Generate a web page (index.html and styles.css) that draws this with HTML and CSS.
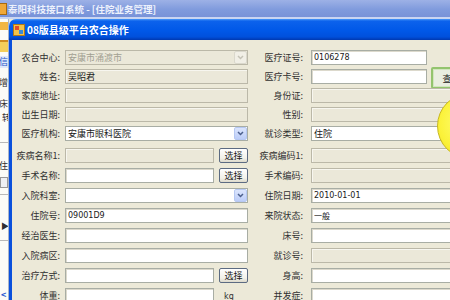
FILE: index.html
```html
<!DOCTYPE html>
<html lang="zh-CN">
<head>
    <meta charset="UTF-8">
    <title>08版县级平台农合操作</title>
    <link rel="stylesheet" href="styles.css">
</head>
<body>
<div class="app">
    <div class="app-title"><span class="app-icon"></span>泰阳科技接口系统 - [住院业务管理]</div>
    <div class="app-main">
        <div class="side">
            <span class="side-icon s1"></span>
            <span class="side-icon s2"></span>
            <span class="side-ch s3">信</span>
            <span class="side-ch s4">增</span>
            <span class="side-ch s5">床</span>
            <span class="side-ch s6">转</span>
            <span class="side-line s7"></span>
            <span class="side-ch s8">住</span>
            <span class="side-box s9"></span>
            <span class="side-line s10"></span>
            <span class="side-ch s11">&#9654;</span>
            <span class="side-line s12"></span>
            <span class="side-ch s13">&lt;</span>
        </div>
        <div class="dialog">
            <div class="dlg-title">
                <svg class="dlg-icon" width="12" height="12" viewBox="0 0 12 12">
                    <rect x="0.5" y="0.5" width="11" height="11" fill="#f3c24a" stroke="#b07818"/>
                    <rect x="2" y="2" width="4" height="4" fill="#e24c2a"/>
                    <rect x="6" y="6" width="4" height="4" fill="#3a8ad8"/>
                </svg>
                08版县级平台农合操作
            </div>
            <div class="dlg-body">
                <div class="form top">
                    <label>农合中心:</label>
                    <div class="combo off"><span>安康市涌渡市</span><i class="combo-btn"><svg width="7" height="5"><polyline points="1,1 3.5,3.5 6,1" /></svg></i></div>
                    <label>医疗证号:</label>
                    <div class="pair"><input class="in short" value="0106278"></div>

                    <label>姓名:</label>
                    <input class="in off" value="吴昭君">
                    <label>医疗卡号:</label>
                    <div class="pair"><input class="in short"><button class="find">查</button></div>

                    <label>家庭地址:</label>
                    <input class="in off">
                    <label>身份证:</label>
                    <input class="in off">

                    <label>出生日期:</label>
                    <input class="in off">
                    <label>性别:</label>
                    <input class="in off">

                    <label>医疗机构:</label>
                    <div class="combo"><span>安康市眼科医院</span><i class="combo-btn"><svg width="7" height="5"><polyline points="1,1 3.5,3.5 6,1" /></svg></i></div>
                    <label>就诊类型:</label>
                    <div class="combo"><span>住院</span></div>
                </div>
                <div class="form bottom">
                    <label>疾病名称1:</label>
                    <div class="pair"><input class="in off"><button class="pick">选择</button></div>
                    <label>疾病编码1:</label>
                    <input class="in off">

                    <label>手术名称:</label>
                    <div class="pair"><input class="in"><button class="pick">选择</button></div>
                    <label>手术编码:</label>
                    <input class="in off">

                    <label>入院科室:</label>
                    <div class="combo"><span></span><i class="combo-btn"><svg width="7" height="5"><polyline points="1,1 3.5,3.5 6,1" /></svg></i></div>
                    <label>住院日期:</label>
                    <input class="in" value="2010-01-01">

                    <label>住院号:</label>
                    <input class="in" value="09001D9">
                    <label>来院状态:</label>
                    <input class="in" value="一般">

                    <label>经治医生:</label>
                    <input class="in">
                    <label>床号:</label>
                    <input class="in">

                    <label>入院病区:</label>
                    <input class="in">
                    <label>就诊号:</label>
                    <input class="in off">

                    <label>治疗方式:</label>
                    <div class="pair"><input class="in"><button class="pick">选择</button></div>
                    <label>身高:</label>
                    <input class="in">

                    <label>体重:</label>
                    <div class="pair"><input class="in"><span class="unit">kg</span></div>
                    <label>并发症:</label>
                    <input class="in">
                </div>
            </div>
        </div>
    </div>
    <div class="glow"></div>
</div>
</body>
</html>
```

FILE: styles.css
```css
body {
    margin: 0;
}
.app {
    position: relative;
    width: 450px;
    height: 300px;
    overflow: hidden;
    background: #ece9d8;
    font-family: "Noto Sans CJK SC", sans-serif;
    font-size: 9px;
    color: #303030;
}
.app-title {
    height: 17px;
    display: flex;
    align-items: center;
    gap: 1px;
    background: linear-gradient(#9db1e6, #809bdd 55%, #7892d8);
    border-bottom: 2px solid #c9d5f2;
    color: #eef2fc;
    font-size: 9.5px;
    font-weight: bold;
    white-space: nowrap;
}
.app-icon {
    width: 10px;
    height: 10px;
    margin-left: -5px;
    background: #f0a838;
    border: 1px solid #a86a10;
}
.app-main {
    display: flex;
    height: 281px;
}
.side {
    width: 9px;
    flex: none;
    display: flex;
    flex-direction: column;
    overflow: hidden;
    background: #fbfbf7;
    border-right: 1px solid #a9b4c9;
    box-sizing: border-box;
}
.side-icon {
    display: block;
    width: 8px;
    flex: none;
}
.s1 { height: 8px; margin-top: 3px; background: #f2b642; }
.s2 { height: 10px; margin-top: 10px; background: #f4cf5a; border-top: 2px solid #d08c20; }
.side-ch {
    display: block;
    height: 12px;
    line-height: 12px;
    flex: none;
    font-size: 9px;
    margin-left: -1px;
    color: #303030;
}
.s3 { margin-top: 4px; color: #2456c8; background: #dfe8fa; }
.s4 { margin-top: 9px; }
.s5 { margin-top: 9px; }
.s6 { margin-top: 2px; margin-left: 2px; }
.side-line { display: block; flex: none; height: 1px; background: #b8b8b8; }
.s7 { margin-top: 18px; }
.s8 { margin-top: 17px; }
.side-box {
    display: block;
    flex: none;
    height: 9px;
    margin-top: 5px;
    border: 1px solid #9a9a9a;
    background: #eef0f4;
}
.s10 { margin-top: 6px; }
.s11 { margin-top: 25px; font-size: 8px; margin-left: 1px; }
.s12 { margin-top: 8px; }
.s13 { margin-top: 48px; color: #2a5ad0; font-weight: bold; margin-left: 1px; }

.dialog {
    flex: 1;
    display: flex;
    flex-direction: column;
}
.dlg-title {
    height: 21px;
    flex: none;
    display: flex;
    align-items: center;
    gap: 2px;
    padding-left: 4px;
    border-top-left-radius: 7px;
    background: linear-gradient(#4a98f8 0, #0c62ec 10%, #0058e8 55%, #0050dc 85%, #0038b0);
    color: #ffffff;
    font-size: 10px;
    font-weight: bold;
    white-space: nowrap;
}
.dlg-body {
    flex: 1;
    background: #ece9d8;
    border-left: 3px solid #0a50dc;
    padding-top: 10px;
}
.form {
    display: grid;
    grid-template-columns: 53px 183px 63px 160px;
    align-items: center;
}
.top {
    grid-template-rows: repeat(5, 15px);
    row-gap: 4px;
}
.bottom {
    margin-top: 7px;
    grid-template-rows: repeat(8, 15px);
    row-gap: 5px;
}
label {
    text-align: right;
    white-space: nowrap;
    padding-right: 5px;
    line-height: 15px;
}
.form label:nth-child(4n+3) {
    padding-right: 8px;
}
.in {
    box-sizing: border-box;
    width: 100%;
    height: 15px;
    margin: 0;
    padding: 0 2px;
    border: 1px solid #a8ada4;
    box-shadow: inset 1px 1px 0 #dcd9cc;
    background: #ffffff;
    font-family: "DejaVu Sans", "Noto Sans CJK SC", sans-serif;
    font-size: 8px;
    color: #202020;
    outline: none;
}
.in.off {
    background: #ebe8d9;
    box-shadow: inset 1px 1px 0 #f7f6ef;
    border-color: #bbb8a8;
    font-family: "Noto Sans CJK SC", sans-serif;
    font-size: 9px;
}
.pair {
    display: flex;
    align-items: flex-start;
    height: 15px;
}
.pair .in {
    width: 149px;
    flex: none;
}
.pair .in.short {
    width: 116px;
}
.pick {
    width: 29px;
    height: 15px;
    margin: 0 0 0 5px;
    padding: 0;
    border: 1px solid #5c6b82;
    border-radius: 2px;
    background: linear-gradient(#ffffff, #f2f1ea 70%, #dcd9cb);
    font-family: "Noto Sans CJK SC", sans-serif;
    font-size: 9px;
    line-height: 12px;
    color: #202020;
}
.find {
    width: 32px;
    height: 22px;
    margin: -2px 0 0 4px;
    padding: 0;
    flex: none;
    border: 2px solid #93c46e;
    border-radius: 2px;
    box-shadow: inset 0 0 0 1px #d2e6bf;
    background: #e9eee0;
    font-family: "Noto Sans CJK SC", sans-serif;
    font-size: 9px;
    color: #202020;
}
.unit {
    margin: 4px 0 0 10px;
    font-family: "DejaVu Sans", sans-serif;
    font-size: 8px;
}
.combo {
    box-sizing: border-box;
    height: 15px;
    display: flex;
    align-items: center;
    justify-content: space-between;
    padding-left: 2px;
    border: 1px solid #a8ada4;
    background: #ffffff;
    color: #202020;
    white-space: nowrap;
}
.combo.off {
    background: #ebe8d9;
    border-color: #bbb8a8;
    color: #a2a092;
}
.combo-btn {
    width: 13px;
    height: 13px;
    display: flex;
    align-items: center;
    justify-content: center;
    box-sizing: border-box;
    border: 1px solid #b6c8f2;
    border-radius: 2px;
    background: linear-gradient(#dbe5fd, #bccdf8);
}
.combo-btn polyline {
    fill: none;
    stroke: #4b5f8c;
    stroke-width: 1.5;
}
.combo.off .combo-btn {
    background: #f1efe6;
    border-color: #dad8cc;
}
.combo.off .combo-btn polyline {
    stroke: #c4c2b6;
}
.glow {
    position: absolute;
    left: 437px;
    top: 93px;
    width: 66px;
    height: 66px;
    border-radius: 50%;
    box-sizing: border-box;
    border: 1px solid #c8b820;
    background: radial-gradient(circle at 45% 45%, #ffff7a, #fbf23a 55%, #e9d816);
}
```
